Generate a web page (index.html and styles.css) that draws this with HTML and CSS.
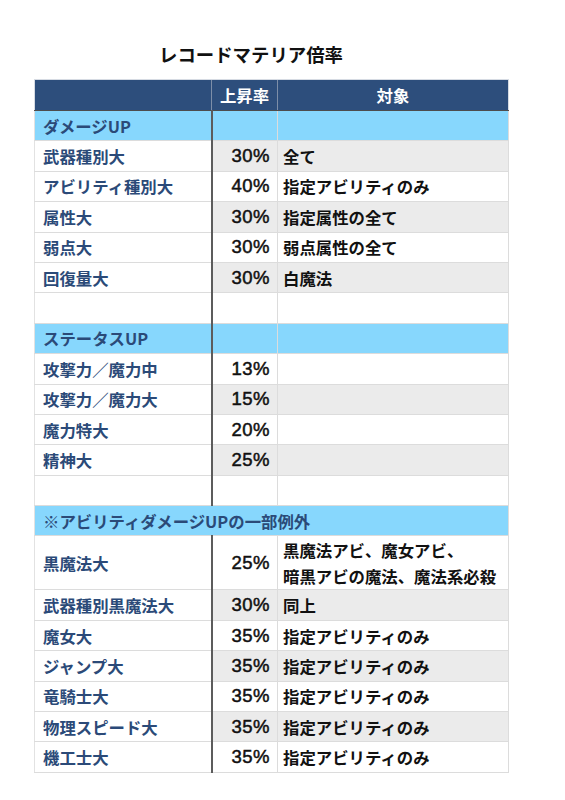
FILE: index.html
```html
<!DOCTYPE html>
<html lang="ja">
<head>
<meta charset="utf-8">
<title>レコードマテリア倍率</title>
<link rel="stylesheet" href="styles.css">
</head>
<body>
<div class="page">
  <h1 class="title">レコードマテリア倍率</h1>
  <table class="rates">
    <colgroup>
      <col class="col-name">
      <col class="col-rate">
      <col class="col-target">
    </colgroup>
    <thead>
      <tr>
        <th class="name"></th>
        <th class="rate">上昇率</th>
        <th class="target">対象</th>
      </tr>
    </thead>
    <tbody>
      <tr class="section"><td class="name">ダメージUP</td><td class="rate"></td><td class="target"></td></tr>
      <tr class="alt"><td class="name">武器種別大</td><td class="rate">30%</td><td class="target">全て</td></tr>
      <tr><td class="name">アビリティ種別大</td><td class="rate">40%</td><td class="target">指定アビリティのみ</td></tr>
      <tr class="alt"><td class="name">属性大</td><td class="rate">30%</td><td class="target">指定属性の全て</td></tr>
      <tr><td class="name">弱点大</td><td class="rate">30%</td><td class="target">弱点属性の全て</td></tr>
      <tr class="alt"><td class="name">回復量大</td><td class="rate">30%</td><td class="target">白魔法</td></tr>
      <tr><td class="name"></td><td class="rate"></td><td class="target"></td></tr>
      <tr class="section"><td class="name">ステータスUP</td><td class="rate"></td><td class="target"></td></tr>
      <tr><td class="name">攻撃力／魔力中</td><td class="rate">13%</td><td class="target"></td></tr>
      <tr class="alt"><td class="name">攻撃力／魔力大</td><td class="rate">15%</td><td class="target"></td></tr>
      <tr><td class="name">魔力特大</td><td class="rate">20%</td><td class="target"></td></tr>
      <tr class="alt"><td class="name">精神大</td><td class="rate">25%</td><td class="target"></td></tr>
      <tr><td class="name"></td><td class="rate"></td><td class="target"></td></tr>
      <tr class="section wide"><td class="name" colspan="3">※アビリティダメージUPの一部例外</td></tr>
      <tr class="double"><td class="name">黒魔法大</td><td class="rate">25%</td><td class="target">黒魔法アビ、魔女アビ、<br>暗黒アビの魔法、魔法系必殺</td></tr>
      <tr class="alt"><td class="name">武器種別黒魔法大</td><td class="rate">30%</td><td class="target">同上</td></tr>
      <tr><td class="name">魔女大</td><td class="rate">35%</td><td class="target">指定アビリティのみ</td></tr>
      <tr class="alt"><td class="name">ジャンプ大</td><td class="rate">35%</td><td class="target">指定アビリティのみ</td></tr>
      <tr><td class="name">竜騎士大</td><td class="rate">35%</td><td class="target">指定アビリティのみ</td></tr>
      <tr class="alt"><td class="name">物理スピード大</td><td class="rate">35%</td><td class="target">指定アビリティのみ</td></tr>
      <tr><td class="name">機工士大</td><td class="rate">35%</td><td class="target">指定アビリティのみ</td></tr>
    </tbody>
  </table>
</div>
</body>
</html>
```
FILE: styles.css
```css
html, body {
  margin: 0;
  padding: 0;
  background: #ffffff;
}

body {
  font-family: "Noto Sans CJK JP", "Noto Sans", sans-serif;
  color: #111111;
}

.page {
  padding: 42px 0 0 34px;
}

.title {
  width: 474px;
  box-sizing: border-box;
  margin: 0 0 13px 0;
  padding-right: 40px;
  font-size: 18.4px;
  line-height: 24px;
  font-weight: 700;
  text-align: center;
  color: #111111;
}

.rates {
  width: 474px;
  table-layout: fixed;
  border-collapse: collapse;
  font-size: 16.4px;
  font-weight: 700;
}

.col-name { width: 177px; }
.col-rate { width: 66px; }
.col-target { width: 231px; }

.rates th {
  height: 30px;
  padding: 0;
  background: #2d4e7c;
  color: #ffffff;
  font-weight: 700;
  text-align: center;
  border-bottom: 1px solid #4d4d4d;
  border-top: 1px solid #d6dbe3;
}

.rates th.rate,
.rates th.target {
  border-left: 1px solid #7d8ea8;
}

.rates th.name {
  border-left: 1px solid #d6dbe3;
}

.rates th.target {
  border-right: 1px solid #d6dbe3;
}

.rates td {
  height: 29.4px;
  padding: 0 7px;
  line-height: 22px;
  border-bottom: 1px solid #dcdcdc;
  white-space: nowrap;
  overflow: visible;
}

.rates td.name {
  padding-left: 8px;
  color: #2b4a78;
  border-left: 1px solid #e2e2e2;
  border-right: 2px solid #5c5c5c;
}

.rates td.rate {
  padding-right: 7px;
  text-align: right;
  color: #111111;
  font-family: "Liberation Sans", "Noto Sans", sans-serif;
  font-size: 18.5px;
  letter-spacing: 0.5px;
  font-weight: 400;
  -webkit-text-stroke: 0.5px #111111;
}

.rates td.target {
  padding-left: 5px;
  color: #111111;
  border-left: 1px solid #dcdcdc;
  border-right: 1px solid #dcdcdc;
}

.rates tr.alt td.rate,
.rates tr.alt td.target {
  background: #ebebeb;
}

.rates tr.section td {
  background: #87d7fd;
}

.rates tr.section td.name {
  color: #2b4a78;
  font-weight: 700;
}

.rates tr.wide td.name {
  border-right: 1px solid #dcdcdc;
}

.rates tr.double td {
  height: 53px;
}

.rates tr.double td.target {
  line-height: 26px;
}
```
